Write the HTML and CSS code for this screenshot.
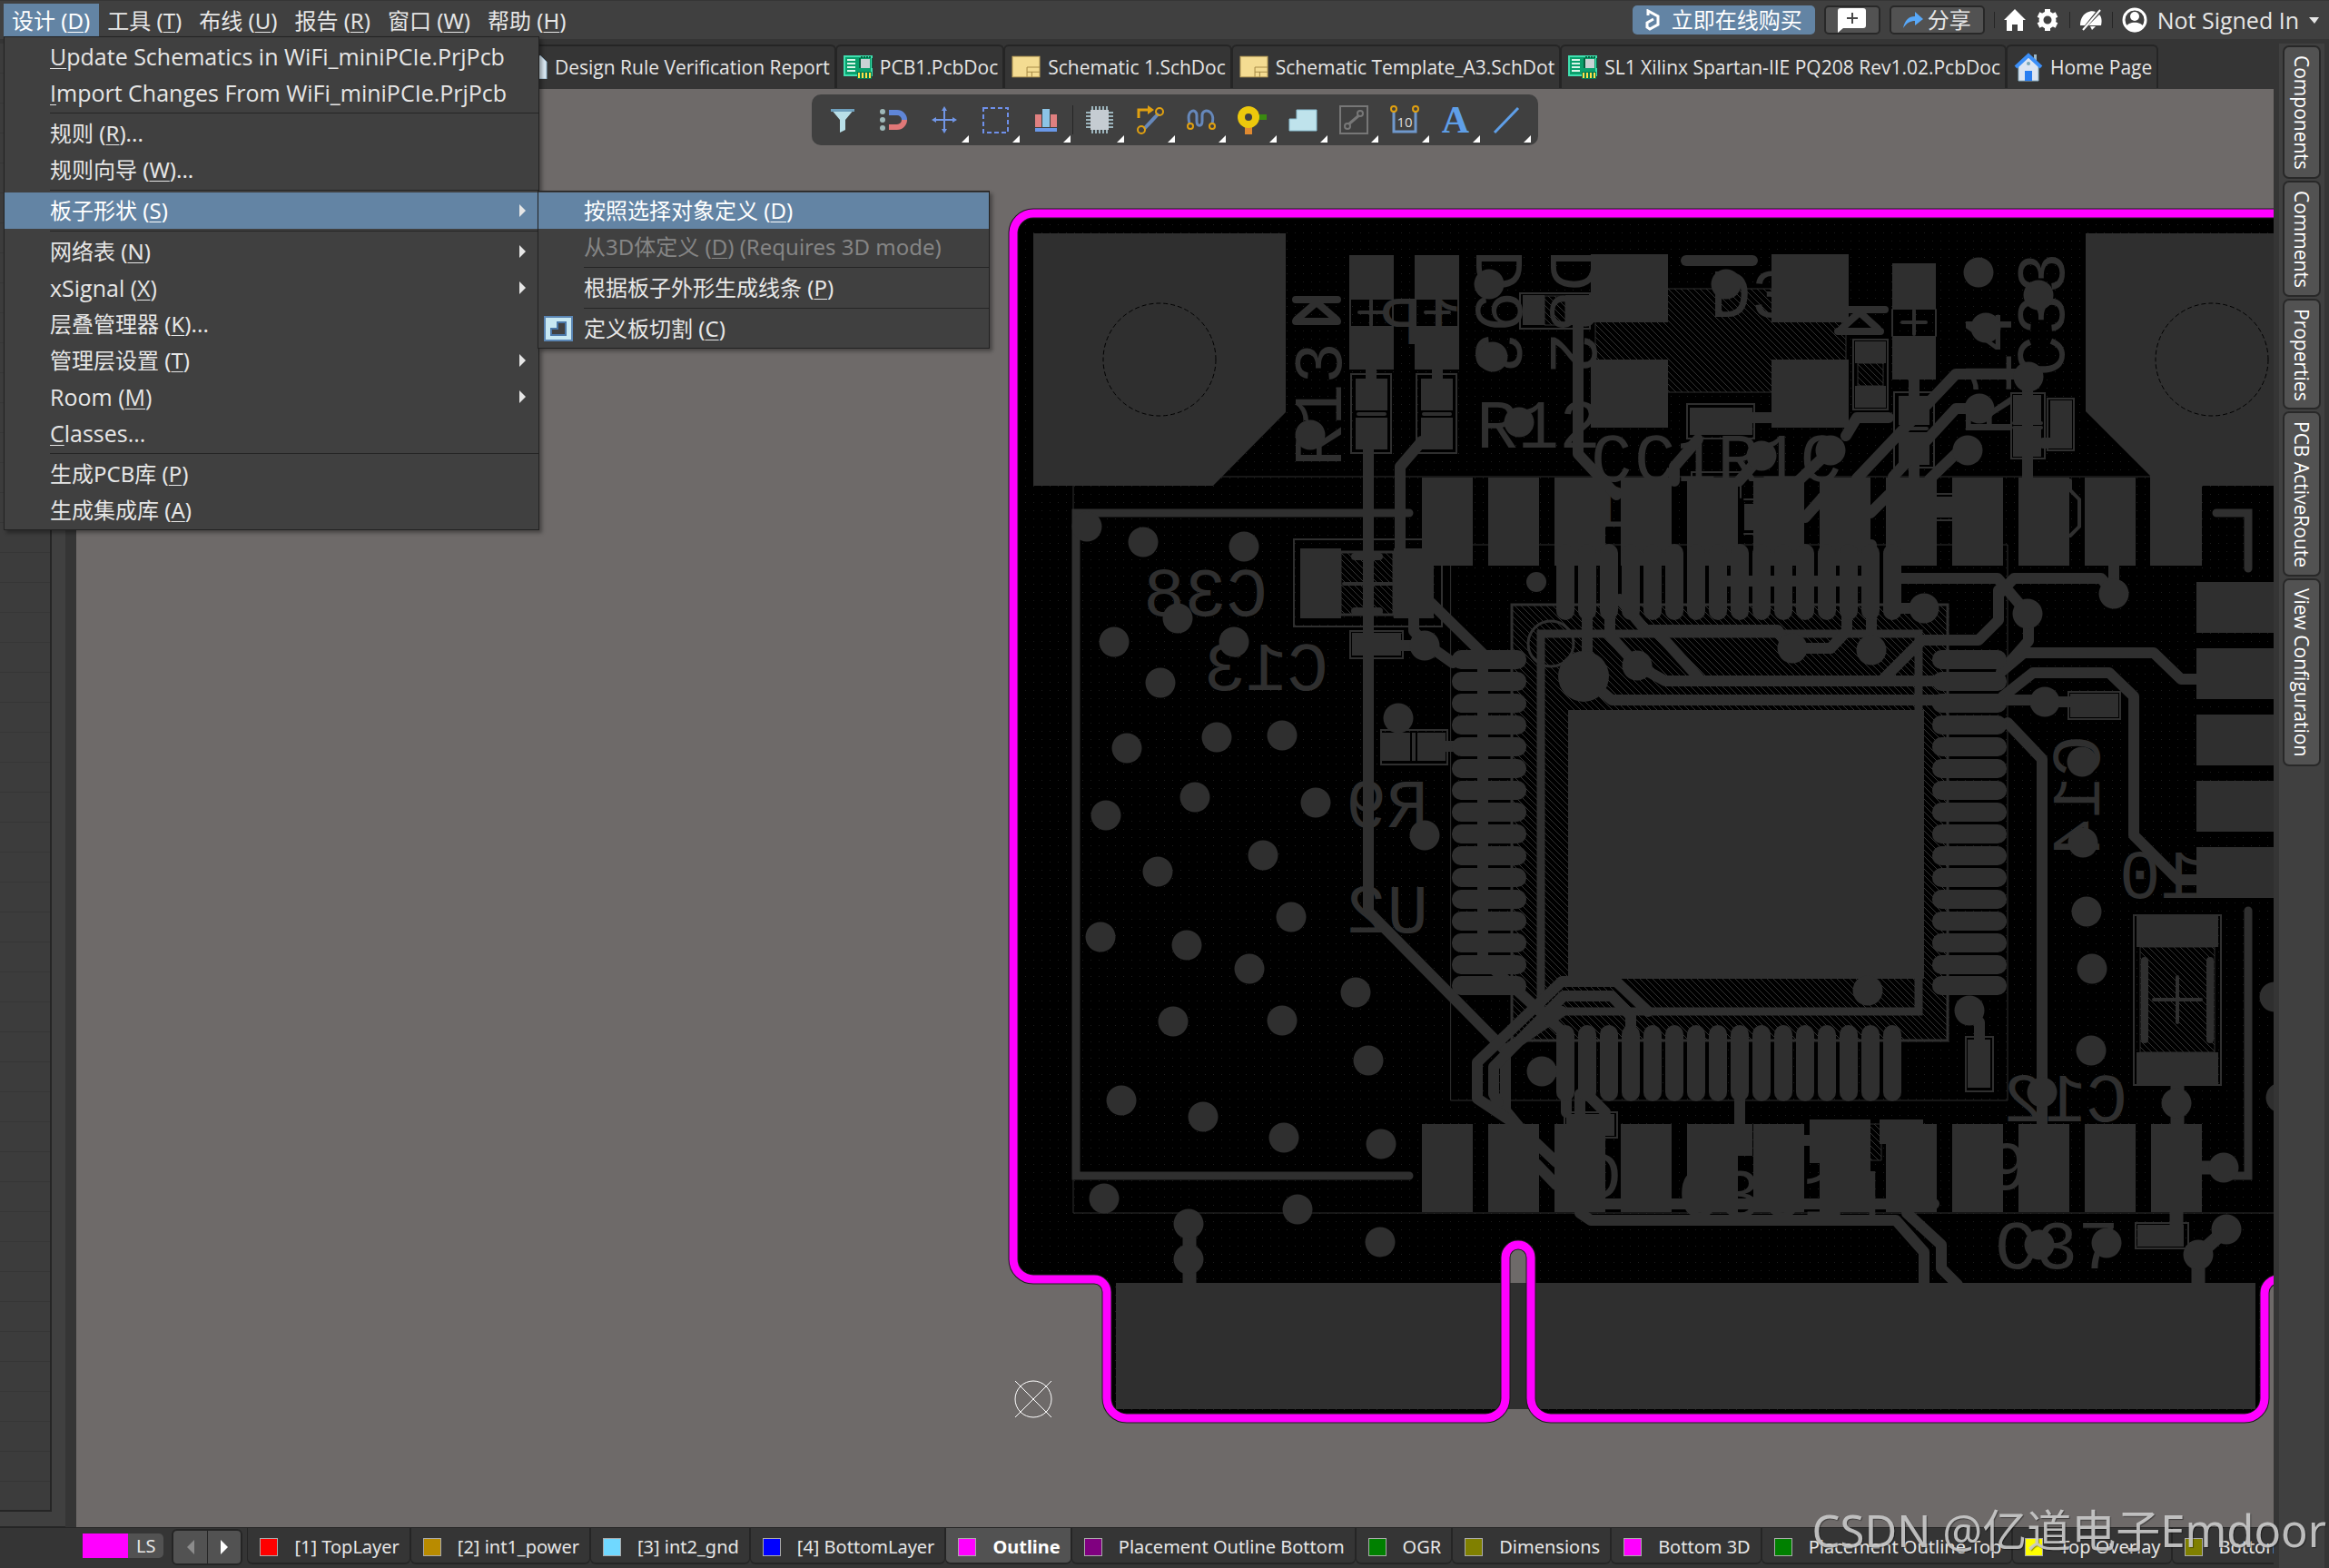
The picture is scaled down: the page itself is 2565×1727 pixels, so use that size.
FILE: index.html
```html
<!DOCTYPE html>
<html lang="zh-CN">
<head>
<meta charset="utf-8">
<meta name="viewport" content="width=device-width, initial-scale=1">
<title>PCB Editor</title>
<link rel="stylesheet" href="styles.css">
</head>
<body>
<svg class="defs" aria-hidden="true">
  <defs>
    <symbol id="i-pcb" viewBox="0 0 32 26">
      <path d="M1 1H31V22H1Z" fill="#0aa06c" stroke="#3fe0b0" stroke-width="2"/>
      <path d="M4 5H13M4 9H13M4 13H13M4 17H13" stroke="#d8f5e8" stroke-width="2"/>
      <path d="M18 3V14M32 3V14M20 1V3M23 1V3M26 1V3M29 1V3" stroke="#06603f" stroke-width="2"/>
      <rect x="19" y="4" width="10" height="10" fill="#c9d2d4"/>
      <rect x="15" y="18" width="16" height="8" fill="#077a4f"/>
      <path d="M17 19V25M21 19V25M25 19V25M29 19V25" stroke="#ffe14a" stroke-width="2"/>
    </symbol>
    <symbol id="i-sch" viewBox="0 0 30 24">
      <path d="M1 1H29V22H1Z" fill="#f4dc92" stroke="#c9ac62" stroke-width="1"/>
      <path d="M16 12H29M16 12V22M16 17H29M21 17V22" stroke="#a88c48" stroke-width="1" fill="none"/>
    </symbol>
    <symbol id="i-house" viewBox="0 0 32 32">
      <path d="M22 2H25V12H22Z" fill="#9db8c9"/>
      <path d="M5 14L16 4L27 14V31H5Z" fill="#dde5f2" stroke="#8db4c8" stroke-width="1"/>
      <path d="M2 16L16 3L30 16" fill="none" stroke="#3c8ff8" stroke-width="4"/>
      <rect x="12" y="20" width="8" height="11" fill="#2b7ef0"/>
      <circle cx="16" cy="12" r="2" fill="#7aa6b8"/>
    </symbol>
  </defs>
</svg>

<div class="app">
  <header class="topbar">
    <nav class="menus">
      <button class="menu menu-open" type="button">设计 (<u>D</u>)</button>
      <button class="menu" type="button">工具 (<u>T</u>)</button>
      <button class="menu" type="button">布线 (<u>U</u>)</button>
      <button class="menu" type="button">报告 (<u>R</u>)</button>
      <button class="menu" type="button">窗口 (<u>W</u>)</button>
      <button class="menu" type="button">帮助 (<u>H</u>)</button>
    </nav>
    <div class="account">
      <button class="buy" type="button">
        <svg width="16" height="24" viewBox="0 0 16 24"><path d="M3 7V2L14 8V17L5 22L2 20V15L9 11" fill="none" stroke="#fff" stroke-width="3"/></svg>
        立即在线购买</button>
      <button class="boxed comment" type="button" aria-label="Comment">
        <svg width="33" height="28" viewBox="0 0 33 28"><path d="M4 1H29A3 3 0 0 1 32 4V20A3 3 0 0 1 29 23H7L1 28V4A3 3 0 0 1 4 1Z" fill="#fff"/><path d="M17 6V18M11 12H23" stroke="#484848" stroke-width="2"/></svg>
      </button>
      <button class="boxed share" type="button">
        <svg width="22" height="20" viewBox="0 0 22 20"><path d="M0 19C2 10 6 6 13 6V1L22 9L13 16V11C8 11 4 13 0 19Z" fill="#58a8f8"/></svg>
        分享</button>
      <span class="bar"></span>
      <button class="glyph" type="button" aria-label="Home"><svg width="24" height="24" viewBox="0 0 24 24"><path d="M12 0L24 12H21V24H15V17H9V24H3V12H0Z" fill="#fff"/></svg></button>
      <button class="glyph" type="button" aria-label="Settings"><svg width="24" height="24" viewBox="0 0 24 24"><circle cx="12" cy="12" r="7" fill="none" stroke="#fff" stroke-width="5"/><path d="M12 0V5M12 19V24M2 6L6 8M18 16L22 18M2 18L6 16M18 8L22 6" stroke="#fff" stroke-width="6"/></svg></button>
      <span class="bar"></span>
      <button class="glyph" type="button" aria-label="Notifications"><svg width="26" height="24" viewBox="0 0 26 24"><path d="M1 18C1 12 3 7 8 4C12 2 15 2 18 3L6 18ZM10 18L22 6C25 9 25 14 24 18Z" fill="#fff"/><path d="M4 23L23 1" stroke="#fff" stroke-width="2"/><path d="M12 19H18L14 23Z" fill="#fff"/></svg></button>
      <span class="bar"></span>
      <button class="user" type="button">
        <svg width="28" height="28" viewBox="0 0 28 28"><circle cx="14" cy="14" r="12" fill="none" stroke="#fff" stroke-width="3"/><circle cx="14" cy="10" r="5" fill="#fff"/><path d="M4 22C7 15 21 15 24 22C19 29 9 29 4 22Z" fill="#fff"/></svg>
        <span>Not Signed In</span>
        <svg width="11" height="7" viewBox="0 0 11 7"><path d="M0 0H11L6 7Z" fill="#e6e6e6"/></svg>
      </button>
    </div>
  </header>

  <div class="body">
    <div class="work">
      <div class="upper">
        <aside class="panel">
          <div class="panel-list"></div>
        </aside>
        <main class="editor">
          <nav class="doctabs">
            <a class="doctab" href="#"><svg width="30" height="26" viewBox="0 0 30 26"><path d="M8 0H22L29 7V26H8Z" fill="#dcebf5" stroke="#8fb0c8"/></svg>Design Rule Verification Report</a>
            <a class="doctab" href="#"><svg width="32" height="26"><use href="#i-pcb"/></svg>PCB1.PcbDoc</a>
            <a class="doctab" href="#"><svg width="32" height="26"><use href="#i-sch"/></svg>Schematic 1.SchDoc</a>
            <a class="doctab" href="#"><svg width="32" height="26"><use href="#i-sch"/></svg>Schematic Template_A3.SchDot</a>
            <a class="doctab" href="#"><svg width="32" height="26"><use href="#i-pcb"/></svg>SL1 Xilinx Spartan-IIE PQ208 Rev1.02.PcbDoc</a>
            <a class="doctab" href="#"><svg width="32" height="32"><use href="#i-house"/></svg>Home Page</a>
          </nav>
          <div class="canvas">
            <svg class="board" viewBox="84 98 2420 1584" preserveAspectRatio="xMinYMin slice">
              <defs>
                <pattern id="dots" width="9" height="9" patternUnits="userSpaceOnUse"><rect x="4" y="4" width="1" height="1" fill="#1e1e1e"/></pattern>
                <pattern id="hatch" width="7" height="7" patternUnits="userSpaceOnUse"><rect width="7" height="7" fill="#000"/><path d="M-1 -1L8 8M-1 6L1 8M6 -1L8 1" stroke="#333" stroke-width="1"/></pattern>
                <rect id="pv" width="56" height="97"/>
                <rect id="ph" width="85" height="56"/>
                <rect id="qh" width="82" height="21" rx="10"/>
                <rect id="qv" width="20" height="84" rx="10"/>
                <path id="edge" d="M2520 235H1138A22 22 0 0 0 1116 257V1387A22 22 0 0 0 1138 1409H1205A14 14 0 0 1 1219 1423V1540A22 22 0 0 0 1241 1562H1636A22 22 0 0 0 1658 1540V1385A14 14 0 0 1 1686 1385V1540A22 22 0 0 0 1708 1562H2472A22 22 0 0 0 2494 1540V1424A15 15 0 0 1 2509 1409H2520Z"/>
              </defs>
              <use href="#edge" fill="#000"/>
              <use href="#edge" fill="url(#dots)"/>

              <!-- hatched keep-outs -->
              <g fill="url(#hatch)" stroke="#2f2f2f" stroke-width="1">
                <path d="M1665 666H2145V1146H1665Z" stroke-width="3"/>
                <path d="M1757 318H2033V432H1757Z"/>
                <path d="M1476 608H1535V677H1476Z" stroke-width="3"/>
                <path d="M1701 326H1724V358H1701Z"/>
                <path d="M2046 400H2074V425H2046Z"/>
                <path d="M2357 1043H2439V1159H2357Z"/>
                <path d="M2058 1238H2072V1278H2058Z"/>
              </g>

              <!-- silkscreen -->
              <g class="silk">
                <path d="M1340 525H2368M1182 535V1336H2504M1598 600H2211V1212H1598Z" stroke-width="1"/>
                <path d="M1425 594H1588V690H1425ZM1487 695H1545V725H1487ZM1521 804H1594V842H1521ZM1488 412H1532V499H1488ZM1560 412H1604V499H1560ZM1674 323H1751V362H1674ZM2041 374H2079V451H2041ZM2215 433H2252V505H2215ZM2255 439H2284V496H2255ZM2086 432H2130V515H2086ZM1858 445H1932V483H1858ZM2278 762H2335V792H2278ZM2165 1142H2195V1202H2165ZM2350 1008H2446V1195H2350ZM2352 1347H2410V1375H2352ZM1723 1225H1781V1253H1723ZM1487 329H1534V359M1487 329V359M1559 329V359M1606 329V359M2084 341V370M2132 341V370M1863 525V520H1917V548M1921 550H1931M1921 588H1931M2133 544H2150M2133 573H2150"/>
                <path d="M1497 344H1524M1510 331V358M1570 344H1596M1583 331V358M2095 355H2121M2108 342V368M1496 456H1525M1568 456H1597M1480 643H1533M2218 466H2248M2218 471H2248M2093 472H2122M2372 1101H2424M2398 1076V1126M2280 529V540L2290 550V580L2280 590" stroke-width="4"/>
                <path d="M1427 330H1473M1427 354H1473M1428 352L1450 333L1472 352M2024 365H2071M2028 362L2048 344L2068 362M2036 341H2076M1492 613H1519M1492 673H1519M2362 1058V1145M2434 1058V1145" stroke-width="8"/>
                <path d="M1857 287H1930" stroke-width="12"/>
                <path d="M1552 565H1185V1295H1552M2441 565H2476V626M2476 1003V1295H2450" stroke-width="9"/>
                <path d="M1697 698H2113V1114H1697Z" stroke-width="9"/>
                <circle cx="1708" cy="709" r="25" stroke-width="3"/>
              </g>
              <g class="ref">
                <text transform="matrix(-1 0 0 1 1396 678)">C38</text>
                <text transform="matrix(-1 0 0 1 1463 760)">C13</text>
                <text transform="matrix(-1 0 0 1 1573 911)">R9</text>
                <text transform="matrix(-1 0 0 1 1573 1027)">U2</text>
                <text transform="translate(1477 514) rotate(-90)">R13</text>
                <text x="1626" y="493">R12</text>
                <text transform="translate(1626 275) rotate(90)">D93</text>
                <text transform="translate(1708 275) rotate(90)">D82</text>
                <text transform="matrix(-1 0 0 1 1610 379)">1P</text>
                <text x="1883" y="349">D3</text>
                <text transform="translate(2273 415) rotate(-90)">C33</text>
                <text transform="translate(2215 480) rotate(-90)">R14</text>
                <text x="1752" y="530">C</text>
                <text x="1800" y="530">C1R1C</text>
                <text transform="matrix(0 1 1 0 2312 810)">C14</text>
                <text transform="matrix(-1 0 0 1 2425 989)">10</text>
                <text transform="matrix(-1 0 0 1 2343 1235)">C12</text>
                <text x="2197" y="1397">C37</text>
                <text x="1740" y="1320">D</text>
                <text x="1848" y="1340">C3C14</text>
                <text x="2188" y="1310">9</text>
                <text transform="matrix(-1 0 0 1 1796 580)">1</text>
              </g>

              <!-- tracks -->
              <g class="track">
                <path d="M1510 400V420M1583 400V420M1507 494V1004L1658 1157V1223L1672 1240M1566 486L1542 514V608M1576 664L1633 720M1557 681V695L1569 708L1600 730M1540 711H1569M1590 822H1602M1738 355V500L1780 545M1633 736V1060"/>
                <path d="M1930 460H1952M1870 484L1844 514V530M2233 415V530M2108 415V440M2108 505V530M2250 488H2258M2033 480L2045 460H2080"/>
                <path d="M2234 412H2154L2045 527M2180 450H2154L2085 525M2167 496H2158L2125 528M2016 496L1975 535M1940 502L1915 530M1988 570L2010 545M2060 565L2080 545"/>
                <path d="M2094 637H2200L2230 672M2201 655L2218 637H2314L2328 653V620M2201 650V683L2179 705H2117L2075 747M2234 676V706L2204 740L2229 719H2372L2402 748H2420M2206 767L2239 741H2323L2350 767V920L2399 969H2420M2211 796L2249 836V1240M2252 773H2282"/>
                <path d="M1748 670V745M1744 745L1775 771H2252M1803 733L1834 750H2130M1827 698L1874 750M1784 660L1812 694H1958L1970 714M1974 714H2016L2034 695V600M2061 716V600M2090 670H2120M2085 600V675M1803 733L1773 700V660M1900 640H2060"/>
                <path d="M1672 1240L1627 1210V1170L1720 1081H1780L1815 1114M1650 1214L1645 1205V1175L1722 1097H1775L1796 1119V1140M1637 1060L1725 1140M1658 1157L1720 1114M1698 1180H1724M1725 1205V1225M1740 1205V1230M1748 1205L1768 1225M1916 1210V1240M1692 1259L1714 1280M1692 1282L1714 1305"/>
                <path d="M1740 1336L1752 1344H2088L2119 1379V1415M2100 1336L2138 1371V1397L2156 1415M2169 1113L2180 1126V1148M1740 1326H2130" />
                <path d="M1310 1348V1415M2398 1192V1240M2425 1286H2449M2397 1335V1352M2421 1381V1415M2452 1354L2421 1382" stroke-width="15"/>
              </g>

              <!-- copper pads -->
              <g class="copper">
                <path d="M1138 257H1416V454L1336 535H1138ZM2297 257H2504V535H2425V623H2368V524L2297 453ZM1727 782H2119V1078H1727Z"/>
                <path d="M1229 1413H2484V1552H1229Z"/>
                <path d="M1486 281H1535V330H1486ZM1486 359H1535V407H1486ZM1558 281H1607V330H1558ZM1558 359H1607V407H1558ZM1493 417H1528V452H1493ZM1493 460H1528V495H1493ZM1565 417H1600V452H1565ZM1565 460H1600V495H1565ZM1432 604H1477V681H1432ZM1535 604H1579V681H1535ZM1489 697H1543V722H1489ZM1522 807H1553V838H1522ZM1561 807H1592V838H1561ZM1555 807H1559V838H1555Z"/>
                <path d="M1752 280H1837V355H1752ZM1752 396H1837V471H1752ZM1951 280H2036V355H1951ZM1951 396H2036V471H1951ZM1677 325H1701V358H1677ZM1724 325H1750V358H1724ZM2043 376H2077V400H2043ZM2043 425H2077V449H2043ZM2084 290H2132V341H2084ZM2084 370H2132V418H2084ZM2217 435H2248V465H2217ZM2217 470H2248V503H2217ZM2258 441H2282V494H2258ZM2091 436H2125V468H2091ZM2091 476H2125V512H2091ZM1861 449H1930V479H1861ZM2280 764H2333V790H2280ZM2167 1145H2192V1198H2167ZM2353 1008H2443V1043H2353ZM2353 1159H2443V1194H2353ZM2354 1349H2405V1373H2354ZM1725 1227H1778V1251H1725ZM1993 1233H2060V1281H1993ZM2070 1233H2118V1260H2070ZM1921 555H1931V584H1921ZM2133 547H2150V570H2133ZM1986 1250H1996V1262H1986ZM1900 1238H1930V1273H1900Z"/>
                <g id="row12">
                  <use href="#pv" x="1566" y="526"/><use href="#pv" x="1639" y="526"/><use href="#pv" x="1712" y="526"/><use href="#pv" x="1785" y="526"/><use href="#pv" x="1858" y="526"/><use href="#pv" x="1931" y="526"/><use href="#pv" x="2004" y="526"/><use href="#pv" x="2077" y="526"/><use href="#pv" x="2150" y="526"/><use href="#pv" x="2223" y="526"/><use href="#pv" x="2296" y="526"/><use href="#pv" x="2369" y="526"/>
                </g>
                <use href="#row12" y="712"/>
                <use href="#ph" x="2419" y="641"/><use href="#ph" x="2419" y="714"/><use href="#ph" x="2419" y="787"/><use href="#ph" x="2419" y="860"/><use href="#ph" x="2419" y="933"/>
                <g id="pinsh">
                  <use href="#qh" x="1599" y="716"/><use href="#qh" x="1599" y="740"/><use href="#qh" x="1599" y="764"/><use href="#qh" x="1599" y="788"/><use href="#qh" x="1599" y="812"/><use href="#qh" x="1599" y="836"/><use href="#qh" x="1599" y="860"/><use href="#qh" x="1599" y="884"/><use href="#qh" x="1599" y="908"/><use href="#qh" x="1599" y="932"/><use href="#qh" x="1599" y="956"/><use href="#qh" x="1599" y="980"/><use href="#qh" x="1599" y="1004"/><use href="#qh" x="1599" y="1028"/><use href="#qh" x="1599" y="1052"/><use href="#qh" x="1599" y="1075"/>
                </g>
                <use href="#pinsh" x="529"/>
                <g id="pinsv">
                  <use href="#qv" x="1714" y="599"/><use href="#qv" x="1738" y="599"/><use href="#qv" x="1762" y="599"/><use href="#qv" x="1786" y="599"/><use href="#qv" x="1810" y="599"/><use href="#qv" x="1834" y="599"/><use href="#qv" x="1858" y="599"/><use href="#qv" x="1882" y="599"/><use href="#qv" x="1906" y="599"/><use href="#qv" x="1930" y="599"/><use href="#qv" x="1954" y="599"/><use href="#qv" x="1978" y="599"/><use href="#qv" x="2002" y="599"/><use href="#qv" x="2026" y="599"/><use href="#qv" x="2050" y="599"/><use href="#qv" x="2074" y="599"/>
                </g>
                <use href="#pinsv" y="530"/>
              </g>

              <!-- vias: zero-length round-capped segments -->
              <path class="via" d="M1197 580h0M1259 597h0M1370 602h0M1297 681h0M1227 707h0M1359 707h0M1278 752h0M1340 812h0M1412 810h0M1241 824h0M1569 711h0M1540 791h0M1640 313h0M1644 393h0M1443 479h0M1673 465h0M1803 733h0M1316 878h0M1218 898h0M1449 884h0M1275 960h0M1391 942h0M1422 1010h0M1212 1032h0M1307 1041h0M1376 1067h0M1493 1093h0M1292 1125h0M1412 1124h0M1507 1168h0M1235 1212h0M1325 1230h0M1414 1253h0M1521 1260h0M1216 1320h0M1429 1332h0M1309 1348h0M1309 1387h0M1520 1368h0M1569 920h0M1698 1180h0M1901 313h0M2179 300h0M2245 325h0M2187 361h0M2234 415h0M2180 450h0M2167 496h0M1940 502h0M2016 496h0M2328 654h0M2233 676h0M2119 670h0M1974 714h0M2061 716h0M2252 773h0M2293 839h0M2294 928h0M2298 1004h0M2304 1067h0M2303 1157h0M2249 1203h0M2169 1113h0M2057 1091h0M2397 1215h0M2449 1286h0M2452 1354h0M2421 1382h0M2320 1369h0M2246 1371h0M2505 1098h0M2512 1209h0"/>
              <circle cx="1744" cy="745" r="28" fill="#2f2f2f"/>
              <circle cx="1692" cy="641" r="11" fill="#2f2f2f"/>
              <g fill="none" stroke="#000" stroke-dasharray="5 3">
                <circle cx="1277" cy="396" r="62"/><circle cx="2436" cy="396" r="62"/>
              </g>

              <use href="#edge" fill="none" stroke="#1c1c1c" stroke-width="11"/>
              <use href="#edge" fill="none" stroke="#f0f" stroke-width="9"/>
              <path d="M1118 1521L1158 1561M1158 1521L1118 1561M1158 1541A20 20 0 1 1 1118 1541A20 20 0 1 1 1158 1541" fill="none" stroke="#fff"/>
            </svg>
          </div>
        </main>
      </div>

      <footer class="layerbar">
        <button class="layerset" type="button"><span class="current"></span>LS</button>
        <div class="scroller">
          <button type="button" aria-label="Previous"><svg width="8" height="16" viewBox="0 0 8 16"><path d="M8 0V16L0 8Z" fill="#8c8c8c"/></svg></button>
          <button type="button" aria-label="Next"><svg width="8" height="16" viewBox="0 0 8 16"><path d="M0 0V16L8 8Z" fill="#fff"/></svg></button>
        </div>
        <nav class="layers">
          <a class="layer" href="#"><i class="red"></i>[1] TopLayer</a>
          <a class="layer" href="#"><i class="gold"></i>[2] int1_power</a>
          <a class="layer" href="#"><i class="sky"></i>[3] int2_gnd</a>
          <a class="layer" href="#"><i class="blue"></i>[4] BottomLayer</a>
          <a class="layer layer-on" href="#"><i class="magenta"></i>Outline</a>
          <a class="layer" href="#"><i class="purple"></i>Placement Outline Bottom</a>
          <a class="layer" href="#"><i class="green"></i>OGR</a>
          <a class="layer" href="#"><i class="olive"></i>Dimensions</a>
          <a class="layer" href="#"><i class="magenta"></i>Bottom 3D</a>
          <a class="layer" href="#"><i class="green"></i>Placement Outline Top</a>
          <a class="layer" href="#"><i class="yellow"></i>Top Overlay</a>
          <a class="layer" href="#"><i class="olive"></i>Bottom Overlay</a>
        </nav>
      </footer>
    </div>

    <aside class="rail">
      <div class="rail-tabs">
        <button type="button">Components</button>
        <button type="button">Comments</button>
        <button type="button">Properties</button>
        <button type="button">PCB ActiveRoute</button>
        <button type="button">View Configuration</button>
      </div>
    </aside>
  </div>

  <div class="toolbar" role="toolbar">
    <button type="button" aria-label="Filter"><svg viewBox="0 0 32 32"><path d="M3 4H29L19 16V27L13 30V16Z" fill="#b9dfe8"/><path d="M3 4H29V7H3Z" fill="#6fa0bd"/></svg></button>
    <button type="button" aria-label="Snap"><svg viewBox="0 0 32 32"><path d="M11 8H20A8 8 0 0 1 28 16" fill="none" stroke="#5f86d8" stroke-width="6"/><path d="M28 16A8 8 0 0 1 20 24H11" fill="none" stroke="#e07878" stroke-width="6"/><g fill="#9fb8b8"><circle cx="4" cy="7" r="3"/><circle cx="4" cy="16" r="3"/><circle cx="4" cy="25" r="3"/></g></svg></button>
    <button class="more" type="button" aria-label="Move"><svg viewBox="0 0 32 32"><path d="M16 4V28M4 16H28" stroke="#7196e6" stroke-width="2"/><path d="M16 1L19 6H13ZM16 31L19 26H13ZM2 16L7 13V19ZM30 16L25 13V19Z" fill="#7196e6"/></svg></button>
    <button class="more" type="button" aria-label="Select"><svg viewBox="0 0 32 32"><rect x="3" y="3" width="27" height="27" fill="none" stroke="#6f90ea" stroke-width="2" stroke-dasharray="5 3"/></svg></button>
    <button class="more" type="button" aria-label="Align"><svg viewBox="0 0 32 32"><path d="M4 10H11V24H4ZM21 10H28V24H21Z" fill="#e08080"/><path d="M12 4H20V24H12Z" fill="#8cc4e6"/><path d="M4 25H28V29H4Z" fill="#6a98e8"/></svg></button>
    <span class="split"></span>
    <button class="more" type="button" aria-label="Component"><svg viewBox="0 0 32 32"><path d="M8 1V31M12 1V31M16 1V31M20 1V31M24 1V31M1 8H31M1 12H31M1 16H31M1 20H31M1 24H31" stroke="#9cb4bc" stroke-width="2"/><rect x="6" y="5" width="20" height="22" fill="#c5ccd2"/></svg></button>
    <button class="more" type="button" aria-label="Route"><svg viewBox="0 0 32 32"><path d="M9 26L25 9" stroke="#6688bb" stroke-width="4"/><path d="M3 14V5H15" fill="none" stroke="#e0a010" stroke-width="3"/><path d="M13 0L20 5L13 10Z" fill="#e0a010"/><g fill="none" stroke="#e0a010" stroke-width="2"><circle cx="26" cy="7" r="4"/><circle cx="6" cy="27" r="4"/></g></svg></button>
    <button class="more" type="button" aria-label="Tune"><svg viewBox="0 0 32 32"><path d="M3 20C-1 4 11 3 11 11V17C11 24 17 24 17 17V11C17 3 32 4 28 20" fill="none" stroke="#6688bb" stroke-width="3"/><g fill="none" stroke="#e0a010" stroke-width="2"><circle cx="4" cy="23" r="3"/><circle cx="28" cy="23" r="3"/></g></svg></button>
    <button class="more" type="button" aria-label="Via"><svg viewBox="0 0 32 32"><path d="M22 10H32V16H22Z" fill="#3a8a10"/><path d="M8 20H16V32H8Z" fill="#e08a30"/><circle cx="12" cy="13" r="12" fill="#ecc80c"/><circle cx="12" cy="13" r="4" fill="#404040"/></svg></button>
    <button class="more" type="button" aria-label="Polygon"><svg viewBox="0 0 32 32"><path d="M1 28V15H9V5H31V28Z" fill="#bfe3ec" stroke="#8cc0d4" stroke-width="1"/></svg></button>
    <button class="more" type="button" aria-label="Rule"><svg viewBox="0 0 32 32"><rect x="1" y="1" width="30" height="30" fill="none" stroke="#777" stroke-width="2"/><path d="M9 22L23 10" stroke="#777" stroke-width="3"/><circle cx="9" cy="23" r="3" fill="#404040" stroke="#777" stroke-width="2"/><circle cx="23" cy="9" r="3" fill="#404040" stroke="#777" stroke-width="2"/></svg></button>
    <button class="more" type="button" aria-label="Dimension"><svg viewBox="0 0 32 32"><path d="M4 7V29H28V7" fill="none" stroke="#6f98cc" stroke-width="3"/><g fill="none" stroke="#e0a010" stroke-width="2"><circle cx="4" cy="4" r="3"/><circle cx="28" cy="4" r="3"/></g><text class="dim" x="16" y="24">10</text></svg></button>
    <button class="more letter" type="button">A</button>
    <button class="more" type="button" aria-label="Line"><svg viewBox="0 0 32 32"><path d="M3 30L29 3" stroke="#5f9fe8" stroke-width="3"/></svg></button>
  </div>

  <div class="dropdown" role="menu">
    <button class="item latin" type="button"><span><u>U</u>pdate Schematics in WiFi_miniPCIe.PrjPcb</span></button>
    <button class="item latin" type="button"><span><u>I</u>mport Changes From WiFi_miniPCIe.PrjPcb</span></button>
    <hr>
    <button class="item" type="button"><span>规则 (<u>R</u>)...</span></button>
    <button class="item" type="button"><span>规则向导 (<u>W</u>)...</span></button>
    <hr>
    <button class="item sub on" type="button"><span>板子形状 (<u>S</u>)</span></button>
    <hr>
    <button class="item sub" type="button"><span>网络表 (<u>N</u>)</span></button>
    <button class="item sub latin" type="button"><span>xSignal (<u>X</u>)</span></button>
    <button class="item" type="button"><span>层叠管理器 (<u>K</u>)...</span></button>
    <button class="item sub" type="button"><span>管理层设置 (<u>T</u>)</span></button>
    <button class="item sub latin" type="button"><span>Room (<u>M</u>)</span></button>
    <button class="item latin" type="button"><span><u>C</u>lasses...</span></button>
    <hr>
    <button class="item" type="button"><span>生成PCB库 (<u>P</u>)</span></button>
    <button class="item" type="button"><span>生成集成库 (<u>A</u>)</span></button>
  </div>

  <div class="dropdown submenu" role="menu">
    <button class="item on" type="button"><span>按照选择对象定义 (<u>D</u>)</span></button>
    <button class="item" type="button" disabled><span>从3D体定义 (<u>D</u>) (Requires 3D mode)</span></button>
    <hr>
    <button class="item" type="button"><span>根据板子外形生成线条 (<u>P</u>)</span></button>
    <hr>
    <button class="item cutout" type="button">
      <svg width="32" height="28" viewBox="0 0 32 28"><rect x="1" y="1" width="30" height="26" fill="#c8e8f2" stroke="#5b86b4" stroke-width="2"/><path d="M15 7H24V21H8V14H15Z" fill="#404040" stroke="#4b78a8" stroke-width="2"/></svg>
      <span>定义板切割 (<u>C</u>)</span></button>
  </div>

  <div class="watermark">CSDN @亿道电子Emdoor</div>
</div>
</body>
</html>
```

FILE: styles.css
```css
* { box-sizing: border-box; }
body { margin: 0; background: #353535; color: #e6e6e6; font: 21px/28px "Open Sans", "Noto Sans CJK SC", sans-serif; }
button { margin: 0; padding: 0; border: 0; background: none; color: inherit; font: inherit; white-space: nowrap; }
a { color: inherit; text-decoration: none; white-space: nowrap; }
svg { display: block; flex: none; }
u { text-decoration-thickness: 1px; text-underline-offset: 3px; }
.defs { position: absolute; width: 0; height: 0; }
.app { position: relative; display: flex; flex-direction: column; height: 100vh; overflow: hidden; }

/* top bar */
.topbar { display: flex; justify-content: space-between; height: 43px; padding: 3px 11px 3px 4px; background: #404040; border-top: 1px solid #353535; }
.menus { display: flex; }
.menu { height: 37px; padding: 0 10px 0 9px; font: 24px/36px "Noto Sans", "Noto Sans CJK SC", sans-serif; }
.menu-open { background: #6384a4; color: #fff; }
.account { display: flex; align-items: center; gap: 10px; font-size: 24px; }
.buy, .boxed { display: flex; align-items: center; justify-content: center; height: 32px; border-radius: 5px; }
.buy { gap: 13px; width: 201px; background: #6384a4; color: #fff; }
.boxed { border: 2px solid #282828; background: #525252; gap: 5px; }
.comment { width: 62px; }
.share { width: 105px; }
.bar { width: 1px; height: 18px; background: #252525; }
.glyph { width: 24px; height: 24px; margin-right: 2px; }
.user { display: flex; align-items: center; gap: 11px; font-size: 25px; }

/* body */
.body { display: flex; flex: 1; min-height: 0; }
.work { display: flex; flex-direction: column; flex: 1; min-width: 0; }
.upper { display: flex; flex: 1; min-height: 0; }
.panel { width: 72px; margin: 5px 12px 0 0; padding: 0 15px 16px 0; background: #404040; border-bottom: 1px solid #252525; }
.panel-list { height: 100%; border: 2px solid #252525; border-width: 0 2px 2px 0; background: repeating-linear-gradient(#3c3c3c 0 32px, #363636 32px 33px); }
.editor { display: flex; flex-direction: column; flex: 1; min-width: 0; }
.doctabs { display: flex; height: 55px; padding: 6px 0 0 480px; }
.doctab { display: flex; align-items: center; gap: 8px; height: 48px; padding: 0 5px 0 7px; border: 2px solid #252525; border-bottom: 0; border-radius: 6px 6px 0 0; margin-right: -1px; }
.canvas { flex: 1; min-height: 0; background: #6e6a69; overflow: hidden; }
.board { width: 100%; height: 100%; }
.silk { fill: none; stroke: #2f2f2f; stroke-width: 2; stroke-linecap: round; }
.ref { fill: #2f2f2f; font: 76px "Liberation Mono", monospace; }
.track { fill: none; stroke: #2f2f2f; stroke-width: 12; stroke-linecap: round; stroke-linejoin: round; }
.copper { fill: #2f2f2f; }
.via { stroke: #2f2f2f; stroke-width: 33; stroke-linecap: round; }

/* layer bar */
.layerbar { display: flex; height: 45px; padding-left: 91px; border-top: 1px solid #252525; font-family: "Noto Sans", sans-serif; font-size: 20px; }
.layerset { display: flex; align-items: center; height: 27px; margin: 6px 9px 0 0; padding-right: 9px; gap: 9px; background: #525252; border-radius: 0 5px 5px 0; }
.current { width: 50px; height: 27px; background: #f0f; }
.scroller { display: flex; height: 40px; margin: 1px 5px 0 0; border: 2px solid #252525; border-radius: 6px; background: #525252; }
.scroller button { display: flex; align-items: center; justify-content: center; width: 37px; }
.scroller button + button { border-left: 1px solid #252525; }
.layers { display: flex; flex: 1; overflow: hidden; }
.layer { display: flex; align-items: center; gap: 18px; height: 40px; padding: 4px 11px 0 13px; border: 1px solid #252525; border-width: 0 1px 2px; border-radius: 0 0 6px 6px; }
.layer-on { background: #525252; color: #fff; font-weight: 700; }
.layer i { width: 20px; height: 20px; border: 1px solid #aaa; }
.red { background: #f00; } .gold { background: #b98b00; } .sky { background: #70d8ff; } .blue { background: #00f; }
.magenta { background: #f0f; } .purple { background: #800080; } .green { background: #008000; } .olive { background: #808000; } .yellow { background: #ff0; }

/* right rail */
.rail { width: 61px; padding: 5px 5px 0 6px; }
.rail-tabs { display: flex; flex-direction: column; align-items: center; gap: 2px; height: 100%; padding: 2px 3px 0; background: #404040; }
.rail-tabs button { width: 42px; padding: 9px 0 8px; border: 2px solid #282828; border-radius: 7px; background: #525252; color: #fff; writing-mode: vertical-rl; line-height: 38px; }

/* floating toolbar */
.toolbar { position: absolute; left: 894px; top: 104px; display: flex; align-items: center; height: 56px; padding: 0 7px 0 6px; border-radius: 10px; background: #404040; }
.toolbar button { position: relative; display: flex; align-items: center; justify-content: center; width: 56px; height: 56px; }
.toolbar svg { width: 32px; height: 32px; }
.more::after { content: ""; position: absolute; right: 1px; bottom: 3px; border: 4px solid transparent; border-right-color: #fff; border-bottom-color: #fff; }
.split { width: 1px; height: 32px; margin: 0 1px; background: #252525; }
.toolbar .letter { color: #5f9fe8; font: 700 42px/42px "Liberation Serif", serif; }
.dim { fill: #ddd; font-size: 15px; text-anchor: middle; }

/* menus */
.dropdown { position: absolute; left: 4px; top: 40px; width: 590px; padding: 1px 0; border: 1px solid #222; background: #404040; box-shadow: 3px 3px 4px rgba(0, 0, 0, .35); }
.item { position: relative; display: flex; align-items: center; width: 100%; height: 40px; padding-left: 50px; font-family: "Noto Sans", "Noto Sans CJK SC", sans-serif; font-size: 24px; }
.latin { font-family: "Open Sans", sans-serif; font-size: 25px; }
.item.on { background: #6384a4; color: #fff; }
.item:disabled { color: #858585; }
.dropdown hr { height: 1px; margin: 2px 0 2px 50px; border: 0; background: #252525; }
.sub::after { content: ""; position: absolute; right: 14px; border: 7px solid transparent; border-width: 7px 0 7px 7px; border-left-color: #e6e6e6; }
.submenu { left: 592px; top: 210px; width: 498px; }
.cutout { gap: 12px; padding-left: 6px; }

.watermark { position: absolute; right: 3px; bottom: 14px; color: rgba(205, 205, 205, .9); font-family: "Noto Sans", "Noto Sans CJK SC", sans-serif; font-size: 49px; line-height: 56px; white-space: nowrap; text-shadow: 1px 1px 1px rgba(0, 0, 0, .4); }
```
